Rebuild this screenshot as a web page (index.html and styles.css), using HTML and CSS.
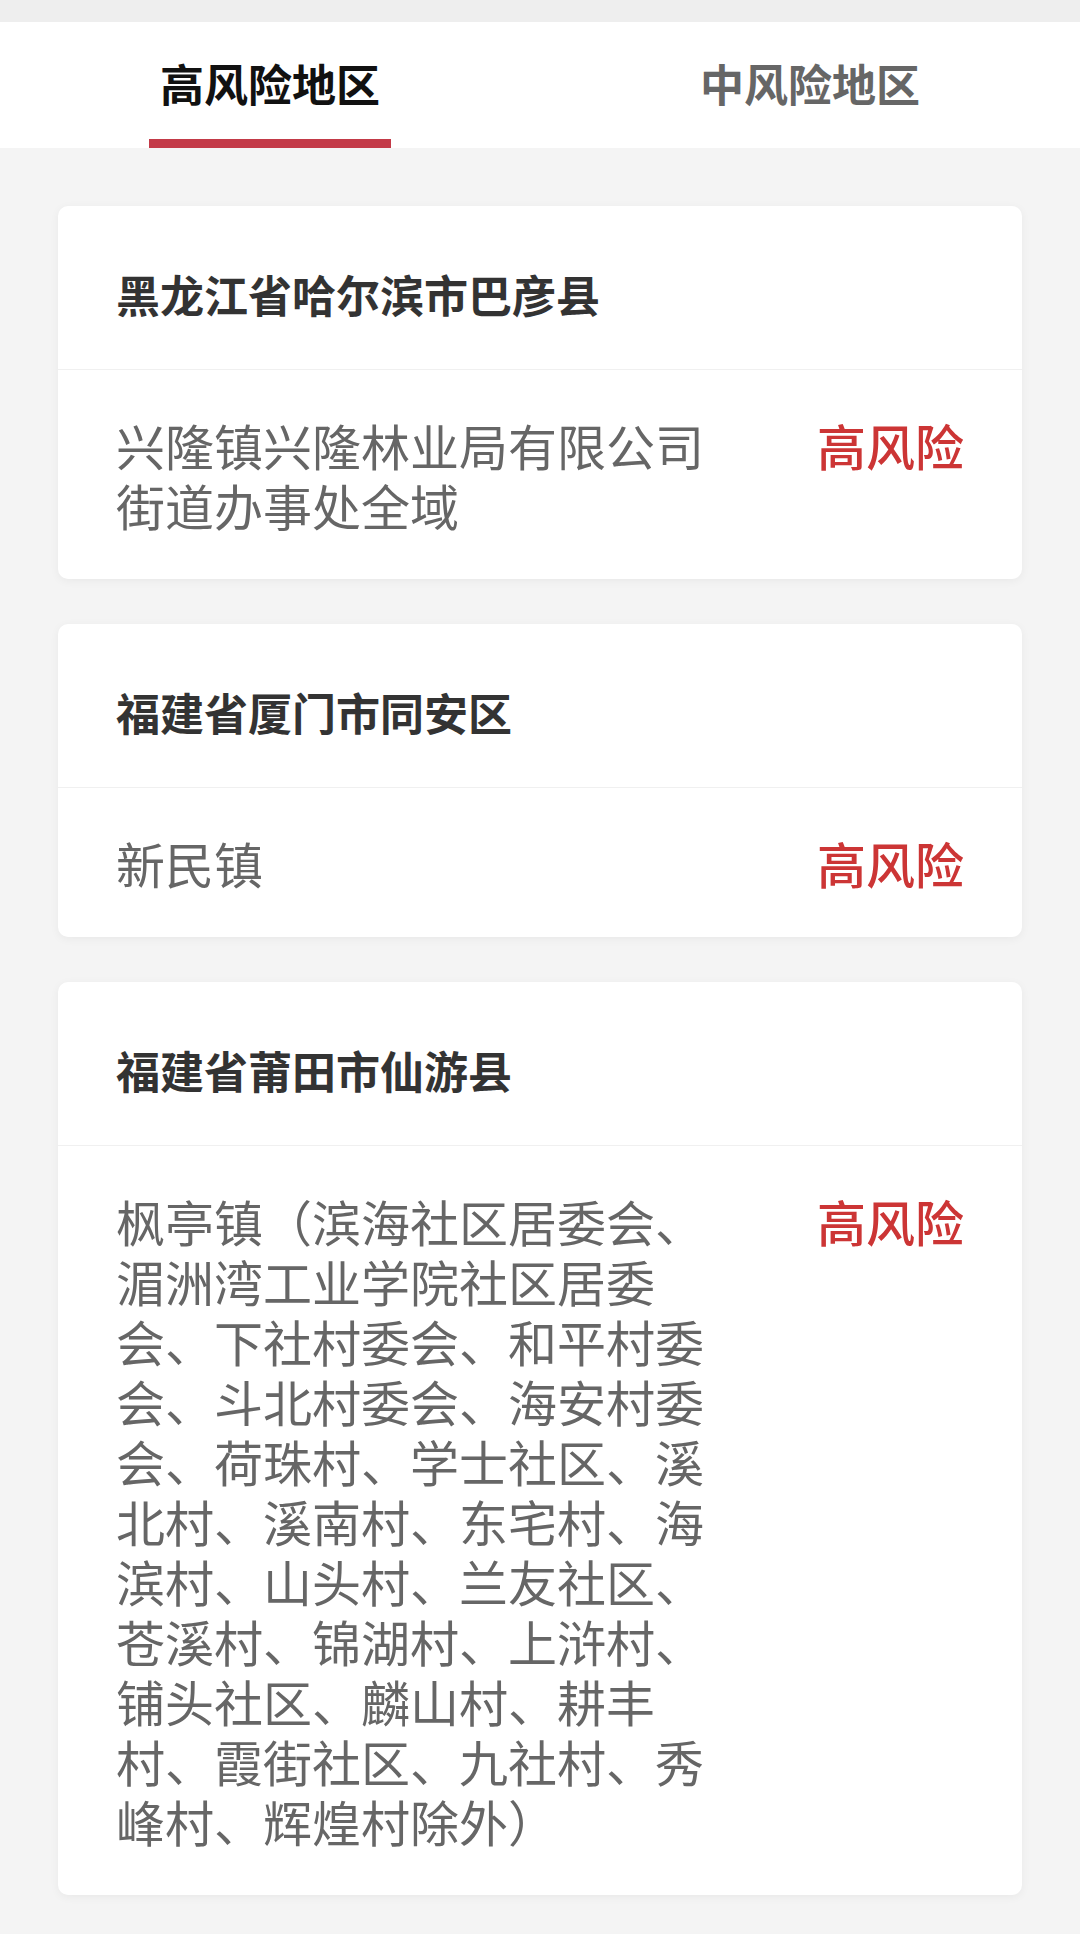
FILE: index.html
```html
<!DOCTYPE html>
<html lang="zh-CN">
<head>
  <meta charset="UTF-8" />
  <meta name="viewport" content="width=device-width, initial-scale=1.0"/>
  <title>风险地区</title>
  <link rel="stylesheet" href="styles.css">
</head>
<body>
  <div class="statusbar"></div>

  <nav class="tabs">
    <div class="tab active">
      <span class="tab-label">高风险地区</span>
      <span class="tab-line"></span>
    </div>
    <div class="tab">
      <span class="tab-label">中风险地区</span>
      <span class="tab-line"></span>
    </div>
  </nav>

  <main class="list">
    <section class="card">
      <h2 class="card-title">黑龙江省哈尔滨市巴彦县</h2>
      <div class="card-body">
        <p class="area">兴隆镇兴隆林业局有限公司街道办事处全域</p>
        <span class="level">高风险</span>
      </div>
    </section>

    <section class="card">
      <h2 class="card-title">福建省厦门市同安区</h2>
      <div class="card-body">
        <p class="area">新民镇</p>
        <span class="level">高风险</span>
      </div>
    </section>

    <section class="card">
      <h2 class="card-title">福建省莆田市仙游县</h2>
      <div class="card-body">
        <p class="area">枫亭镇（滨海社区居委会、湄洲湾工业学院社区居委会、下社村委会、和平村委会、斗北村委会、海安村委会、荷珠村、学士社区、溪北村、溪南村、东宅村、海滨村、山头村、兰友社区、苍溪村、锦湖村、上浒村、铺头社区、麟山村、耕丰村、霞街社区、九社村、秀峰村、辉煌村除外）</p>
        <span class="level">高风险</span>
      </div>
    </section>
  </main>
</body>
</html>
```

FILE: styles.css
```css
:root {
  --bg: #f4f4f4;
  --white: #fff;
  --red: #cc3535;
  --line-red: #c33a48;
  --text-dark: #333;
  --text-gray: #666;
  --divider: #f0f0f0;
}

body {
  margin: 0;
  font-family: "Noto Sans CJK SC", "Noto Sans", sans-serif;
  background: var(--bg);
  color: var(--text-dark);
}

.statusbar {
  height: 22px;
  background: #eeeeee;
}

.tabs {
  display: flex;
  height: 126px;
  background: var(--white);
}

.tab {
  flex: 1;
  display: flex;
  flex-direction: column;
  align-items: center;
  justify-content: space-between;
  padding-top: 33px;
}

.tab-label {
  font-size: 44px;
  line-height: 56px;
  font-weight: 700;
  color: var(--text-gray);
}

.tab.active .tab-label {
  color: #111;
}

.tab-line {
  width: 242px;
  height: 9px;
}

.tab.active .tab-line {
  background: var(--line-red);
}

.list {
  display: flex;
  flex-direction: column;
  gap: 45px;
  padding: 58px 58px 40px;
}

.card {
  background: var(--white);
  border-radius: 10px;
  box-shadow: 0 2px 10px rgba(0,0,0,0.05);
}

.card-title {
  margin: 0;
  padding: 62px 58px 49px;
  font-size: 44px;
  line-height: 52px;
  font-weight: 700;
  color: var(--text-dark);
  border-bottom: 1px solid var(--divider);
}

.card-body {
  display: flex;
  justify-content: space-between;
  align-items: flex-start;
  padding: 45px 58px 44px;
}

.area {
  margin: 0;
  width: 600px;
  font-size: 49px;
  line-height: 60px;
  color: var(--text-gray);
}

.level {
  font-size: 49px;
  line-height: 60px;
  font-weight: 500;
  color: var(--red);
}
```
